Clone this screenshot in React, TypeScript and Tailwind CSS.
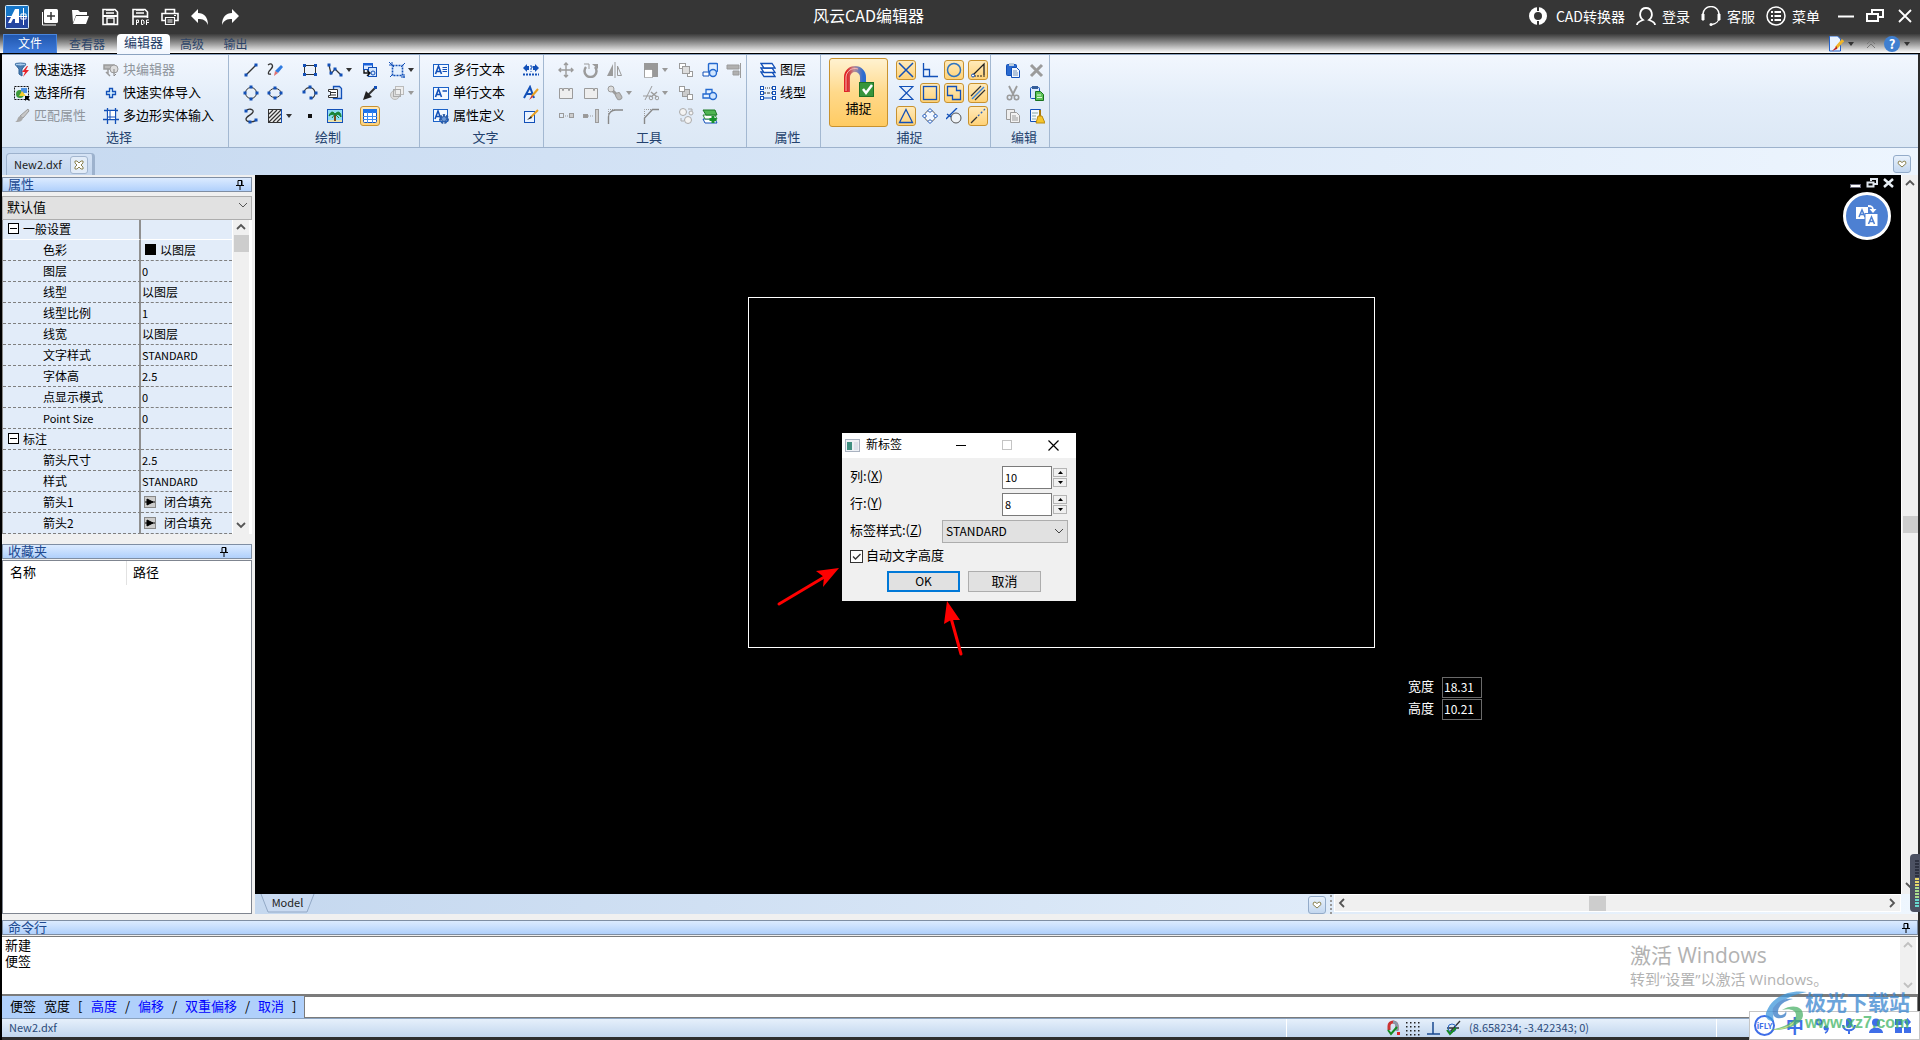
import { useState, type ReactNode } from "react";

const B = "#1250b8";
const G = "#9b9b9b";
const D = "#333";

type SvgProps = { children: ReactNode; w?: number; h?: number; vb?: string };

function Svg({ children, w = 16, h = 16, vb }: SvgProps) {
  return (
    <svg width={w} height={h} viewBox={vb ?? `0 0 ${w} ${h}`} fill="none" className="shrink-0" aria-hidden="true">
      {children}
    </svg>
  );
}

const dots = (pts: number[][], c = B) =>
  pts.map(([x, y]) => <rect key={`${x}-${y}`} x={x - 1.5} y={y - 1.5} width="3" height="3" fill={c} />);

const ico: Record<string, ReactNode> = {
  quickSelect: (
    <>
      <path d="M1 2h11l-4 5v7l-3-2V7z" fill="#4a7fb5" stroke="#2c5f94" />
      <ellipse cx="6.500" cy="2.500" rx="5.500" ry="1.500" fill="#a9cdee" stroke="#3c6ea3" />
      <path d="M13 4l-5 6h3l-2 5 6-7h-3l2-4z" fill="#e8252b" />
    </>
  ),
  selectAll: (
    <>
      <rect x=".5" y="1.500" width="14" height="13" stroke="#111" strokeDasharray="2 1" />
      <circle cx="6" cy="9" r="4" fill="#3f9a3a" />
      <rect x="7" y="3" width="6" height="5" fill="#4b8fe0" />
      <path d="M8 6l4 5H5z" fill="#f5cf2e" />
      <path d="M11 11h5l-2 2 2 2-1 1-2-2-2 2z" fill="#000" />
    </>
  ),
  matchProps: (
    <>
      <path d="M14 1l1 2-6 7-3-2z" fill="#c8c8c8" stroke={G} />
      <path d="M6 8l3 2c-1 4-4 4-8 4 3-1 2-5 5-6z" fill="#aaa" />
    </>
  ),
  blockEdit: (
    <>
      <path d="M1 3h10v4H1zM5 7v5M3 10l4 4" stroke={G} strokeWidth="1.500" fill="#bbb" />
      <circle cx="11" cy="7" r="4" stroke={G} fill="#ddd" />
      <path d="M11 7v7l2-2" stroke="#888" />
    </>
  ),
  plus: <path d="M6.500 3.500h3v3h3v3h-3v3h-3v-3h-3v-3h3z" stroke={B} fill="#d8f0ff" strokeWidth="1.300" />,
  polyEntity: (
    <>
      <path d="M4.500 0v16M0 11.500h16M1 2.500h14M12.500 0v16" stroke={B} strokeWidth="1.300" />
      <rect x="4.500" y="2.500" width="8" height="9" fill="#fff" stroke={B} />
      <path d="M7 2v10M4 9h9" stroke={B} />
    </>
  ),
  line: (
    <>
      <path d="M3 13L13 3" stroke={D} strokeWidth="1.300" />
      {dots([[3, 13], [13, 3]])}
    </>
  ),
  sketch: (
    <>
      <path d="M1 3c4-3 6 1 3 4s-4 6 0 5" stroke={D} strokeWidth="1.300" />
      <path d="M14 3l2 2-5 6-3-2z" fill="#2f7be0" />
      <path d="M8 9l3 2-4 3z" fill="#e07070" />
    </>
  ),
  rect: (
    <>
      <rect x="2.500" y="3.500" width="11" height="9" stroke={D} />
      {dots([[2.500, 3.500], [13.500, 3.500], [2.500, 12.500], [13.500, 12.500]])}
    </>
  ),
  polyline: (
    <>
      <path d="M2 3l2 9 4-5 6 6" stroke={D} strokeWidth="1.200" />
      {dots([[2, 3], [4, 11], [8, 7], [14, 13]])}
    </>
  ),
  insertBlock: (
    <>
      <rect x="1.500" y="1.500" width="9" height="6" fill="#dbe9ff" stroke={B} />
      <rect x="1" y="1" width="10" height="2.500" fill="#1b62d8" />
      <rect x="6.500" y="5.500" width="8" height="9" fill="#d5e6fb" stroke={B} />
      <path d="M2 8v3h5M5 8.500L8 11l-3 3" stroke="#111" strokeWidth="1.400" />
      <circle cx="11" cy="11" r="2" stroke={B} />
    </>
  ),
  boundary: (
    <>
      <rect x="3.500" y="3.500" width="10" height="10" stroke={B} strokeWidth="1.600" strokeDasharray="2 1" fill="#e4f0fe" />
      <path d="M0 0l5 5M3 0v3M0 3h3M16 1l-4 4M1 15l3-3M15 12v4M12 15h4" stroke={B} />
    </>
  ),
  circle: (
    <>
      <circle cx="8" cy="8" r="5.500" stroke={D} />
      {dots([[8, 2], [8, 14], [2, 8], [14, 8]])}
    </>
  ),
  ellipse: (
    <>
      <ellipse cx="8" cy="8" rx="6" ry="4.500" stroke={D} />
      {dots([[8, 3], [8, 13], [2, 8], [14, 8]])}
    </>
  ),
  arc: (
    <>
      <path d="M2 8a5.500 5.500 0 1 1 7 5.500" stroke={D} strokeWidth="1.300" />
      {dots([[2, 7], [8, 2], [14, 8], [9, 13]])}
    </>
  ),
  copyDoc: (
    <>
      <path d="M6.500 1.500h6l2 2v10h-8z" fill="#cfe0f7" stroke={B} strokeWidth="1.300" />
      <path d="M1.500 4.500h9v8h-9v-2h2v-4h-2zM4 7.500h5M4 10h5" fill="#fff" stroke={D} />
    </>
  ),
  leader: (
    <>
      <path d="M13 3L5 11" stroke={D} strokeWidth="2" />
      <path d="M1 15l3-9 6 6z" fill="#222" />
      {dots([[13.500, 2.500]])}
    </>
  ),
  region: (
    <>
      <circle cx="6" cy="10" r="4.500" fill="#ddd" stroke="#bbb" />
      <rect x="6.500" y="1.500" width="8" height="8" fill="#eee" stroke="#bbb" />
      <rect x="4.500" y="4.500" width="7" height="7" stroke="#aaa" />
    </>
  ),
  spline: (
    <>
      <path d="M3 3c2-3 8-2 7 1s-7 4-7 7 6 4 11 1" stroke={D} strokeWidth="1.300" />
      {dots([[3, 3], [13, 12], [7, 14]])}
    </>
  ),
  hatch: (
    <>
      <rect x="1.500" y="1.500" width="13" height="13" stroke={D} fill="#eee" />
      <path d="M2 6l4-4M2 10l8-8M2 14L14 2M6 14l8-8M10 14l4-4" stroke={D} strokeWidth="1.200" />
      <path d="M14.500 1v14" stroke={B} />
    </>
  ),
  point: <rect x="6" y="6" width="4" height="4" fill="#111" />,
  palm: (
    <>
      <rect x=".5" y="1.500" width="15" height="13" fill="#8fdcf2" stroke={B} />
      <path d="M1 12h14v2H1z" fill="#e9e3b0" />
      <path d="M8 6v7" stroke="#7a4a1c" strokeWidth="2" />
      <path d="M8 6C5 2 3 5 2 8c2-2 4-2 6-1 2-1 4-1 6 2 0-4-2-7-6-3zM8 6l-3 4M8 6l4 4" fill="#178437" stroke="#178437" />
    </>
  ),
  table: (
    <>
      <rect x="1.500" y="1.500" width="13" height="13" rx="1" fill="#fff" stroke={B} />
      <rect x="1" y="1" width="14" height="4" fill="#1f74ea" />
      <path d="M1 8.500h14M1 11.500h14M5.500 4v11M10.500 4v11" stroke="#3e8bf0" />
    </>
  ),
  mtext: (
    <>
      <rect x=".5" y="2.500" width="15" height="12" fill="#f4f9ff" stroke="#1b62c8" />
      <path d="M2.500 12l3-8 3 8M4 9.500h4" stroke={B} strokeWidth="1.600" />
      <path d="M9.500 5.500H14M9.500 7.500H14M9.500 9.500H14" stroke={B} />
    </>
  ),
  stext: (
    <>
      <rect x=".5" y="2.500" width="15" height="12" fill="#f4f9ff" stroke="#1b62c8" />
      <path d="M2.500 12l3-8 3 8M4 9.500h4" stroke={B} strokeWidth="1.600" />
      <path d="M9.500 6H14" stroke={B} strokeWidth="1.500" />
    </>
  ),
  attdef: (
    <>
      <rect x=".5" y="1.500" width="14" height="12" fill="#f4f9ff" stroke="#1b62c8" />
      <path d="M2 11l3-8 3 8M3 8.500h4" stroke={B} strokeWidth="1.500" />
      <circle cx="11" cy="11" r="3.500" stroke="#2a5ca8" strokeWidth="3" strokeDasharray="2 1" />
      <circle cx="11" cy="11" r="2.500" fill="#6d9ad8" stroke="#2a5ca8" />
    </>
  ),
  findText: (
    <>
      <path d="M0 6l4-4v2h2v4H4v2zM16 6l-4-4v2h-2v4h2v2z" fill={B} />
      <path d="M7 4h2v2H8v2M8 9v1" stroke={B} />
      <path d="M0 12.500h16" stroke={B} strokeDasharray="2 1" strokeWidth="2" />
    </>
  ),
  textStyle: (
    <>
      <path d="M1 13L7 2l4 11M3 9h6" stroke={B} strokeWidth="2" />
      <path d="M15 4l-6 7" stroke="#e8a020" strokeWidth="2" />
      <path d="M9 10l-3 5 4-3z" fill="#c33" />
    </>
  ),
  editText: (
    <>
      <rect x="1.500" y="3.500" width="10" height="11" fill="#eaf3ff" stroke={B} />
      <path d="M15 2L8 9" stroke="#e8a020" strokeWidth="2" />
      <path d="M8 8l-4 4 5-2z" fill="#222" />
    </>
  ),
  move: <path d="M8 1v14M1 8h14M6 3l2-2 2 2M6 13l2 2 2-2M3 6L1 8l2 2M13 6l2 2-2 2" stroke={G} strokeWidth="1.400" />,
  rotate: (
    <>
      <path d="M3 5a6 6 0 1 0 9 0" stroke={G} strokeWidth="2.500" />
      <path d="M9 2h6v5z" fill={G} />
      <path d="M1 2h5v5" stroke={G} />
    </>
  ),
  mirror: (
    <>
      <path d="M6 2v12H0z" fill={G} />
      <path d="M10.500 4v9.500h4z" stroke={G} />
      <path d="M8 0v16" stroke={G} />
    </>
  ),
  scale: (
    <>
      <rect x="1" y="1" width="14" height="14" fill="#999" />
      <rect x="1.500" y="7.500" width="8" height="8" fill="#fff" stroke="#777" strokeDasharray="1 1" />
    </>
  ),
  group1: (
    <>
      <rect x="1.500" y="1.500" width="6" height="5" stroke={G} fill="#fff" />
      <rect x="9.500" y="9.500" width="5" height="5" stroke={G} fill="#fff" />
      <rect x="4.500" y="4.500" width="7" height="7" stroke={G} fill="#ddd" />
    </>
  ),
  group2: (
    <>
      <rect x="4.500" y="4.500" width="7" height="7" stroke={G} fill="#ccc" />
      <rect x="1.500" y="1.500" width="5" height="5" stroke={G} fill="#fff" />
      <rect x="9.500" y="9.500" width="5" height="5" stroke={G} fill="#fff" />
    </>
  ),
  explode: (
    <>
      <rect x="6.500" y="1.500" width="9" height="8" rx="1" stroke="#2369cf" fill="#e1efff" strokeWidth="1.400" />
      <path d="M1 10h6v4H1z" fill="#fff" stroke={B} />
      <circle cx="11" cy="11" r="3.500" stroke="#2369cf" fill="#cfe5ff" strokeWidth="1.400" />
    </>
  ),
  join: (
    <>
      <path d="M4 9V4.500h6V7M1 9h7v4H1z" fill="#e8f3ff" stroke="#2369cf" strokeWidth="1.300" />
      <circle cx="11" cy="11" r="3.500" stroke="#2369cf" fill="#cfe5ff" strokeWidth="1.400" />
    </>
  ),
  align: (
    <>
      <path d="M14.500 1v15" stroke={G} />
      <path d="M1 3h12v4H1zM7 9h6v4H7z" fill="#b0b0b0" stroke={G} />
    </>
  ),
  break1: <path d="M1.500 3.500h3v2h1v-2h5v2h1v-2h3v10h-13z" stroke={G} fill="#eee" />,
  break2: <path d="M1.500 3.500h9v2h1v-2h3v10h-13z" stroke={G} fill="#eee" />,
  chain: (
    <>
      <circle cx="4" cy="4" r="3" fill="#ddd" stroke={G} />
      <path d="M6 6l4 4" stroke={G} strokeWidth="3" />
      <rect x="9" y="8" width="5" height="7" rx="2" transform="rotate(-30 11 11)" fill="#bbb" stroke={G} />
    </>
  ),
  trim: (
    <>
      <path d="M2 15L9 1M0 11h8" stroke={G} />
      <path d="M8 7l6 5M14 7l-6 5" stroke={G} strokeWidth="1.400" />
      <circle cx="8" cy="13" r="1.800" stroke={G} />
      <circle cx="14" cy="13" r="1.800" stroke={G} />
    </>
  ),
  stretch: (
    <>
      <rect x="1.500" y="5.500" width="4" height="4" stroke={G} />
      <path d="M7 8h4" stroke={G} strokeDasharray="1 1" />
      <rect x="11.500" y="5.500" width="4" height="4" stroke={G} fill="#ccc" />
    </>
  ),
  extend: (
    <>
      <rect x=".5" y="6.500" width="4" height="3" stroke={G} fill="#999" />
      <path d="M5 8h6" stroke={G} strokeDasharray="1 1" />
      <rect x="12.500" y="1.500" width="3" height="13" stroke={G} fill="#ccc" />
    </>
  ),
  fillet: (
    <>
      <path d="M1.500 16V9c0-4 3-7 7-7H16" stroke="#888" strokeWidth="1.400" />
      <path d="M1.500 8V1.500H8" stroke={G} strokeDasharray="1 1" />
    </>
  ),
  chamfer: (
    <>
      <path d="M1.500 16V10l8-8.500H16" stroke="#888" strokeWidth="1.400" />
      <path d="M1.500 8V1.500H8" stroke={G} strokeDasharray="1 1" />
    </>
  ),
  spheres: (
    <>
      <circle cx="5" cy="4" r="3.500" fill="#f4f4f4" stroke="#aaa" />
      <circle cx="10" cy="12" r="3.500" fill="#f4f4f4" stroke="#aaa" />
      <circle cx="13" cy="5" r="2" fill="#f4f4f4" stroke="#aaa" />
      <path d="M10 1h4v2M3 10v3h3" stroke="#aaa" />
    </>
  ),
  layerAdd: (
    <>
      <path d="M1 11l2 4h12l-2-4z" fill="#fff" stroke={B} />
      <path d="M1 7l2 4h12l-2-4z" fill="#fff" stroke="#2a8a35" />
      <path d="M1 2h12l2 5H4z" fill="#4fb552" stroke="#1d7a26" />
      <path d="M11 8v7M7.500 11.500h7" stroke="#16912a" strokeWidth="3" />
    </>
  ),
  layers: (
    <>
      <path d="M1 10h11l3 4.500H4z" fill="#fff" stroke={B} strokeWidth="1.300" />
      <path d="M1 6h11l3 4.500H4z" fill="#fff" stroke={B} strokeWidth="1.300" />
      <path d="M1 1.500h11l3 4.500H4z" fill="#fff" stroke={B} strokeWidth="1.300" />
    </>
  ),
  linetype: (
    <>
      <path d="M3 3h10" stroke={D} strokeDasharray="1 1" />
      <path d="M3 8h10" stroke={D} strokeDasharray="3 1" />
      <path d="M3 13h10" stroke={B} />
      {[3, 8, 13].map((y) => [2, 14].map((x) => <rect key={`${x}${y}`} x={x - 1.500} y={y - 1.500} width="3" height="3" fill="#fff" stroke={B} />))}
    </>
  ),
  sCross: <path d="M1 1l14 14M15 1L1 15" stroke={B} strokeWidth="1.500" />,
  sPerp: <path d="M1.500 1v13.500H16M1.500 7.500h6v7" stroke={B} strokeWidth="1.300" />,
  sCircle: <circle cx="8" cy="8" r="6.500" stroke="#2e73c0" strokeWidth="1.500" />,
  sAngle: (
    <>
      <path d="M2 14L14 2v11" stroke="#222" strokeWidth="1.300" />
      <path d="M4 14h11" stroke="#222" strokeDasharray="2 1" />
      <circle cx="3" cy="13.500" r="1.500" fill="#fff" stroke={B} />
    </>
  ),
  sHour: <path d="M1 1.500h14L2 14.500h13L2 1.500" stroke={B} strokeWidth="1.200" />,
  sSquare: <rect x="1.500" y="1.500" width="13" height="13" stroke={B} strokeWidth="1.300" />,
  sPoly: <path d="M1.500 1.500h9v4h4v9h-8v-4h-5z" stroke={B} strokeWidth="1.300" />,
  sPara: (
    <>
      <path d="M1 11L11 1M5 15L15 5" stroke="#333" strokeWidth="1.200" />
      <path d="M2 14L14 2" stroke="#3d86de" strokeWidth="1.500" />
    </>
  ),
  sTri: <path d="M8 1.500l6.500 13h-13z" stroke={B} strokeWidth="1.300" />,
  sQuad: (
    <>
      <circle cx="8" cy="8" r="5.500" fill="#f3f8ff" stroke="#666" />
      {[[8, 2.500], [8, 13.500], [2.500, 8], [13.500, 8]].map(([x, y]) => (
        <path key={`${x}${y}`} d={`M${x} ${y - 2}l2 2-2 2-2-2z`} fill="#fff" stroke={B} />
      ))}
    </>
  ),
  sTan: (
    <>
      <circle cx="10" cy="10" r="5" fill="#f0f4f8" stroke="#555" />
      <path d="M0 11L11 0M1 6l4 3" stroke={B} strokeWidth="1.400" />
    </>
  ),
  sExt: (
    <>
      <path d="M1 15l6-6" stroke="#333" strokeWidth="1.300" />
      <path d="M8 8l7-7" stroke="#2a66c0" strokeDasharray="2 2" strokeWidth="1.300" />
    </>
  ),
  paste: (
    <>
      <rect x="1.500" y="2.500" width="10" height="11" rx="1" fill="#2a6ad0" stroke={B} />
      <rect x="4" y="1" width="5" height="3" fill="#bcd" />
      <path d="M6.500 5.500h5l3 3v7h-8z" fill="#f4f8ff" stroke={B} />
      <path d="M8 9h4M8 11h5M8 13h5" stroke="#7090b8" />
    </>
  ),
  del: <path d="M2 3l11 11M13 3L2 14" stroke={G} strokeWidth="3" />,
  cut: (
    <>
      <path d="M4 1l5 10M12 1L7 11" stroke={G} strokeWidth="1.800" />
      <circle cx="4.500" cy="12.500" r="2.200" stroke={G} strokeWidth="1.600" />
      <circle cx="11.500" cy="12.500" r="2.200" stroke={G} strokeWidth="1.600" />
    </>
  ),
  pasteGreen: (
    <>
      <rect x="1.500" y="2.500" width="9" height="11" rx="1" fill="#dbe9fc" stroke={B} />
      <rect x="3" y="1" width="6" height="3" fill="#345d9a" />
      <path d="M6.500 6.500h5l3 3v6h-8z" fill="#5cc256" stroke="#17711f" />
      <path d="M8 10h4M8 12.500h5" stroke="#dff7dc" />
    </>
  ),
  copy: (
    <>
      <path d="M1.500 1.500h8v10h-8z" fill="#eee" stroke={G} />
      <path d="M5.500 4.500h6l3 3v7h-9z" fill="#f2f2f2" stroke={G} />
      <path d="M7 8h4M7 10h6M7 12h6" stroke={G} />
    </>
  ),
  pasteBrush: (
    <>
      <path d="M1.500 1.500h10v12h-10z" fill="#f4f8ff" stroke={B} />
      <path d="M3 5h6M3 8h4M3 11h4" stroke="#8aa" />
      <path d="M11 2v7" stroke="#a87a10" strokeWidth="2" />
      <path d="M9 8h4l3 7H7z" fill="#f5c52c" stroke="#b98a12" />
    </>
  ),
};

function Caret({ dim }: { dim?: boolean }) {
  return (
    <Svg w={6} h={4}>
      <path d="M0 0h6L3 4z" fill={dim ? "#999" : "#333"} />
    </Svg>
  );
}

type Tool = { n: string; t: string; a?: boolean; dim?: boolean; on?: boolean } | null;

function IconTool({ tool }: { tool: Tool }) {
  if (!tool) return <span />;
  return (
    <button
      aria-label={tool.t}
      className={
        tool.on
          ? "flex size-5 items-center justify-center justify-self-start rounded-[3px] border border-[#c8922f] bg-gradient-to-b from-[#ffeaba] to-[#ffd277]"
          : "flex h-5 items-center gap-[3px] justify-self-start px-0.5"
      }
    >
      <Svg>{ico[tool.n]}</Svg>
      {tool.a && <Caret dim={tool.dim} />}
    </button>
  );
}

function TextTool({ n, t, dim }: { n: string; t: string; dim?: boolean }) {
  return (
    <button className={`flex h-[23px] items-center gap-1 whitespace-nowrap text-[13px] leading-[19px] ${dim ? "text-[#8f959c]" : "text-black"}`}>
      <Svg>{ico[n]}</Svg>
      <span className="pb-[3px]">{t}</span>
    </button>
  );
}

function Group({ label, width, children }: { label: string; width: string; children: ReactNode }) {
  return (
    <section aria-label={label} className={`flex shrink-0 flex-col border-r border-[#a3b8d1] pt-[3px] ${width}`}>
      <div className="flex h-[69px]">{children}</div>
      <h2 className="pl-2 text-center text-[13px] leading-5 text-[#24426e]">{label}</h2>
    </section>
  );
}

const drawTools: Tool[] = [
  { n: "line", t: "直线" }, { n: "sketch", t: "草图" }, { n: "rect", t: "矩形" }, { n: "polyline", t: "多段线", a: true }, { n: "insertBlock", t: "插入块" }, { n: "boundary", t: "边界", a: true },
  { n: "circle", t: "圆" }, { n: "ellipse", t: "椭圆" }, { n: "arc", t: "圆弧" }, { n: "copyDoc", t: "外部参照" }, { n: "leader", t: "引线" }, { n: "region", t: "面域", a: true, dim: true },
  { n: "spline", t: "样条曲线" }, { n: "hatch", t: "填充", a: true }, { n: "point", t: "点" }, { n: "palm", t: "图像" }, { n: "table", t: "表格", on: true }, null,
];

const editTools: Tool[] = [
  { n: "move", t: "移动" }, { n: "rotate", t: "旋转" }, { n: "mirror", t: "镜像" }, { n: "scale", t: "缩放", a: true, dim: true }, { n: "group1", t: "前置" }, { n: "explode", t: "分解" }, { n: "align", t: "对齐" },
  { n: "break1", t: "打断" }, { n: "break2", t: "打断于点" }, { n: "chain", t: "连接", a: true, dim: true }, { n: "trim", t: "修剪", a: true, dim: true }, { n: "group2", t: "后置" }, { n: "join", t: "合并" }, null,
  { n: "stretch", t: "拉伸" }, { n: "extend", t: "延伸" }, { n: "fillet", t: "圆角" }, { n: "chamfer", t: "倒角" }, { n: "spheres", t: "替换" }, { n: "layerAdd", t: "添加图层" }, null,
];

const snapTools: Tool[] = [
  { n: "sCross", t: "交点", on: true }, { n: "sPerp", t: "垂足" }, { n: "sCircle", t: "圆心", on: true }, { n: "sAngle", t: "角度", on: true },
  { n: "sHour", t: "最近点" }, { n: "sSquare", t: "端点", on: true }, { n: "sPoly", t: "插入点", on: true }, { n: "sPara", t: "平行", on: true },
  { n: "sTri", t: "中点", on: true }, { n: "sQuad", t: "象限点" }, { n: "sTan", t: "切点" }, { n: "sExt", t: "延长线", on: true },
];

const clipTools: Tool[] = [
  { n: "paste", t: "粘贴" }, { n: "del", t: "删除" }, { n: "cut", t: "剪切" },
  { n: "pasteGreen", t: "粘贴为块" }, { n: "copy", t: "复制" }, { n: "pasteBrush", t: "清理" },
];

const quick: [string, ReactNode][] = [
  ["新建", <><rect x="3" y="1" width="14" height="14" rx="1.500" fill="#fff" /><path d="M1.500 4v13H15" stroke="#fff" /><path d="M10 4v8M6 8h8" stroke="#363636" strokeWidth="1.500" /></>],
  ["打开", <><path d="M1 2h6l2 2h7v3H5l-3 8z" fill="#fff" /><path d="M5 8h13l-3 8H2z" fill="#fff" /></>],
  ["保存", <><path d="M2 1.500h12l2.500 2.500v12.500H2z" stroke="#fff" strokeWidth="1.600" /><path d="M5 5h8M5 2h8" stroke="#fff" strokeWidth="1.500" /><path d="M2 8h14" stroke="#fff" strokeWidth="2" /><path d="M6 10v6h7v-6z" stroke="#fff" strokeWidth="1.400" /></>],
  ["保存为PDF", <><path d="M2 17V1.500h12l2.500 2.500V10" stroke="#fff" strokeWidth="1.600" /><path d="M5 5h8M5 2h8" stroke="#fff" strokeWidth="1.500" /><path d="M2 8.500h14" stroke="#fff" strokeWidth="2" /><path d="M5.500 17v-5h2v2.500h-2M10.500 12v4.500H12l1-1v-2.500l-1-1zM15.500 17v-5H18M15.500 14.500H18" stroke="#fff" /></>],
  ["打印", <><path d="M4.500 5V1.500h9V5M4 12.500H1V5.500h16v7h-3" stroke="#fff" strokeWidth="1.600" /><path d="M4.500 9.500h9v7h-9zM6.500 12h5M6.500 14h5M13 7.500h2" stroke="#fff" strokeWidth="1.200" /></>],
  ["撤销", <path d="M7 1v4c6 0 10 4 10 12-2-5-5-6-10-6v4L0 8z" fill="#fff" />],
  ["重做", <path d="M11 1v4C5 5 1 9 1 17c2-5 5-6 10-6v4l7-7z" fill="#fff" />],
];

function TitleBar() {
  const link = "flex items-center gap-1.5 text-sm leading-5 text-white whitespace-nowrap";
  return (
    <header className="flex h-[34px] shrink-0 items-center bg-[#363636] text-white">
      <div className="flex items-center pl-[5px]">
        <Svg w={24} h={24}>
          <rect x=".5" y=".5" width="23" height="23" rx="1" fill="#1676c8" stroke="#d7ecfb" />
          <rect x="1" y="12" width="22" height="11" fill="#2446a0" />
          <path d="M3 18L10 4h4v14h-4v-4H8l-2 4z" fill="#fff" />
          <path d="M2 11.500h20M18.500 3v17M16 9h5v5h-5z" stroke="#fff" />
        </Svg>
        <div className="ml-1.5 flex">
          {quick.map(([t, d]) => (
            <button key={t} aria-label={t} className="flex h-7 w-[30px] items-center justify-center">
              <Svg w={18} h={18}>{d}</Svg>
            </button>
          ))}
        </div>
      </div>
      <h1 className="flex-1 pr-9 pb-1 text-center text-base leading-6 font-normal">风云CAD编辑器</h1>
      <nav className="flex items-center pb-0.5">
        <a href="#converter" className="flex items-center gap-2 text-sm leading-5 whitespace-nowrap text-white">
          <Svg w={20} h={20}>
            <circle cx="10" cy="10" r="6.500" stroke="#fff" strokeWidth="5" />
            <path d="M10 0v5M10 15v5" stroke="#363636" strokeWidth="2" />
          </Svg>
          CAD转换器
        </a>
        <a href="#login" className={`${link} ml-[11px]`}>
          <Svg w={20} h={20}>
            <path d="M1 19c0-3 3-4 6-5-5-4-3-12 3-12s8 8 3 12c3 1 6 2 6 5" stroke="#fff" strokeWidth="1.800" />
          </Svg>
          登录
        </a>
        <a href="#service" className={`${link} ml-[11px]`}>
          <Svg w={20} h={20}>
            <path d="M2 8a8 7.500 0 0 1 16 0v3c0 4-3 7-7 7.500" stroke="#fff" strokeWidth="1.400" />
            <path d="M1 8v6h2V8zM17 8v6h2V8z" fill="#fff" stroke="#fff" />
            <circle cx="10" cy="18.500" r="1.500" fill="#fff" />
          </Svg>
          客服
        </a>
        <a href="#menu" className={`${link} ml-[11px]`}>
          <Svg w={20} h={20}>
            <circle cx="10" cy="10" r="9" stroke="#fff" strokeWidth="1.500" />
            <path d="M5 6h2M5 10h2M5 14h2M8.500 6H15M8.500 10H15M8.500 14H15" stroke="#fff" strokeWidth="1.800" />
          </Svg>
          菜单
        </a>
        <button aria-label="最小化" className="ml-[18px]"><Svg><path d="M0 8.500h16" stroke="#fff" strokeWidth="2" /></Svg></button>
        <button aria-label="还原" className="ml-3">
          <Svg w={18} h={16}>
            <path d="M1 6h11v7H1zM6 5V2h11v7h-4" stroke="#fff" strokeWidth="2" />
          </Svg>
        </button>
        <button aria-label="关闭" className="mr-2 ml-3.5"><Svg w={14} h={16}><path d="M1 2l12 12M13 2L1 14" stroke="#fff" strokeWidth="1.800" /></Svg></button>
      </nav>
    </header>
  );
}

function TabRow() {
  const tab = "pb-px text-xs leading-[17px] text-[#2d4468]";
  return (
    <nav className="flex h-5 shrink-0 items-stretch border-b border-black bg-gradient-to-b from-[#3c3c3c] to-white px-[3px]">
      <button className="w-[54px] border border-b-0 border-[#4a86dc] bg-gradient-to-b from-[#2157ae] to-[#3e7bdc] pb-0.5 text-xs leading-4 text-white">文件</button>
      <button className={`${tab} w-[60px]`}>查看器</button>
      <button className="-mb-px w-[53px] rounded-t-sm bg-gradient-to-b from-white to-[#f2f7fe] pb-1 text-[13px] leading-4 text-[#1f3c66]">编辑器</button>
      <button className={`${tab} w-11`}>高级</button>
      <button className={`${tab} w-[43px]`}>输出</button>
      <div className="ml-auto flex items-center gap-1 pr-[7px]">
        <button aria-label="样式" className="flex items-center gap-1">
          <Svg><path d="M1.500 0h8l3 3v12h-11z" fill="#e9f3ff" stroke="#2563c9" /><path d="M15 4L8 12" stroke="#f0b428" strokeWidth="3" /><path d="M9 10l-5 5 5-2z" fill="#b22" /></Svg>
          <Caret />
        </button>
        <button aria-label="折叠功能区" className="ml-2"><Svg w={10} h={10}><path d="M1 5l4-4 4 4M1 9l4-4 4 4" stroke="#777" /></Svg></button>
        <button aria-label="帮助" className="ml-1 flex items-center gap-1">
          <span className="flex size-4 items-center justify-center rounded-full bg-[#3f7fd0] text-[13px] leading-4 font-bold text-white">?</span>
          <Caret />
        </button>
      </div>
    </nav>
  );
}

function Ribbon() {
  return (
    <div className="flex h-[94px] shrink-0 overflow-hidden border-y border-t-[#8ba3c0] border-b-[#9db2cc] bg-gradient-to-b from-[#f2f7fe] via-[#e3edf9] to-[#dce8f5]">
      <Group label="选择" width="w-[227px]">
        <div className="grid grid-cols-[89px_auto] content-start pl-3">
          <div className="grid grid-rows-[23px_23px_23px]">
            <TextTool n="quickSelect" t="快速选择" />
            <TextTool n="selectAll" t="选择所有" />
            <TextTool n="matchProps" t="匹配属性" dim />
          </div>
          <div className="grid grid-rows-[23px_23px_23px]">
            <TextTool n="blockEdit" t="块编辑器" dim />
            <TextTool n="plus" t="快速实体导入" />
            <TextTool n="polyEntity" t="多边形实体输入" />
          </div>
        </div>
      </Group>
      <Group label="绘制" width="w-[191px]">
        <div className="grid grid-cols-[24px_35px_25px_35px_27px_33px] grid-rows-[23px_23px_23px] items-center pl-3">
          {drawTools.map((t, i) => <IconTool key={i} tool={t} />)}
        </div>
      </Group>
      <Group label="文字" width="w-[124px]">
        <div className="grid grid-cols-[88px_20px] grid-rows-[23px_23px_23px] items-center pl-[13px]">
          <TextTool n="mtext" t="多行文本" /><IconTool tool={{ n: "findText", t: "查找文本" }} />
          <TextTool n="stext" t="单行文本" /><IconTool tool={{ n: "textStyle", t: "文字样式" }} />
          <TextTool n="attdef" t="属性定义" /><IconTool tool={{ n: "editText", t: "编辑文字" }} />
        </div>
      </Group>
      <Group label="工具" width="w-[203px]">
        <div className="grid grid-cols-[25px_24px_36px_35px_24px_24px_24px] grid-rows-[23px_23px_23px] items-center pl-3">
          {editTools.map((t, i) => <IconTool key={i} tool={t} />)}
        </div>
      </Group>
      <Group label="属性" width="w-[74px]">
        <div className="grid grid-rows-[23px_23px_23px] pl-[13px]">
          <TextTool n="layers" t="图层" />
          <TextTool n="linetype" t="线型" />
        </div>
      </Group>
      <Group label="捕捉" width="w-[170px]">
        <button className="ml-2 flex w-[59px] shrink-0 flex-col items-center rounded-[3px] border border-[#c8922f] bg-gradient-to-b from-[#fff2d0] via-[#ffd98a] to-[#ffcb62] pt-1.5 text-[13px] leading-[18px] text-black">
          <Svg w={32} h={34}>
            <defs>
              <linearGradient id="mag" x1="0" x2="1"><stop offset="0" stopColor="#e02424" /><stop offset=".45" stopColor="#b98f98" /><stop offset="1" stopColor="#2d6cd0" /></linearGradient>
            </defs>
            <path d="M4 27V12a8 8 0 0 1 16 0v9" stroke="url(#mag)" strokeWidth="6" />
            <path d="M3 26V12a9 9 0 0 1 12-8" stroke="#f6b4b4" />
            <rect x="16.500" y="17.500" width="14" height="14" fill="#37953c" stroke="#1e7326" />
            <path d="M20 24l3 4 6-8" stroke="#fff" strokeWidth="2.500" />
          </Svg>
          捕捉
        </button>
        <div className="ml-2 grid grid-cols-[24px_24px_24px_20px] grid-rows-[23px_23px_23px] items-center">
          {snapTools.map((t, i) => <IconTool key={i} tool={t} />)}
        </div>
      </Group>
      <Group label="编辑" width="w-[59px]">
        <div className="grid grid-cols-[24px_20px] grid-rows-[23px_23px_23px] items-center pl-3">
          {clipTools.map((t, i) => <IconTool key={i} tool={t} />)}
        </div>
      </Group>
    </div>
  );
}

function HeartButton() {
  return (
    <button aria-label="更多" className="flex h-[18px] w-[18px] items-center justify-center rounded-[3px] border border-[#93abc9] bg-gradient-to-b from-[#e8f1fc] to-[#c3d7ef]">
      <Svg w={10} h={8}><path d="M5 7L1 3.500 1.500 1.500 3 1l2 1.500L7 1l1.500.5.5 2z" fill="#fff" stroke="#8a8250" /></Svg>
    </button>
  );
}

function Pin() {
  return (
    <button aria-label="固定面板">
      <Svg w={8} h={10}><path d="M2 .5h4v5H2zM0 5.500h8M4 6v4" stroke="#000" /><path d="M5.500 1v5" stroke="#000" /></Svg>
    </button>
  );
}

function PanelHead({ title, pad = "pr-[7px]" }: { title: string; pad?: string }) {
  return (
    <div className={`flex h-[15px] shrink-0 items-center justify-between border border-[#7f8ea3] bg-gradient-to-b from-[#dcebff] to-[#b0d0fb] pl-[5px] ${pad}`}>
      <h2 className="pb-0.5 text-[13px] leading-[13px] text-[#204a90]">{title}</h2>
      <Pin />
    </div>
  );
}

function Chev({ dir, c = "#555" }: { dir: "up" | "down" | "left" | "right"; c?: string }) {
  const d = { up: "M1 6l4-4 4 4", down: "M1 3l4 4 4-4", left: "M6 1L2 5l4 4", right: "M3 1l4 4-4 4" }[dir];
  return <Svg w={10} h={10}><path d={d} stroke={c} strokeWidth="1.800" /></Svg>;
}

const arrow = (
  <Svg w={12} h={12}><rect x=".5" y=".5" width="11" height="11" fill="#ccc" stroke="#888" /><path d="M1 6h10M3 3l6 3-6 3z" fill="#000" stroke="#000" /></Svg>
);

const rows: { k: string; v?: string; i?: ReactNode; head?: boolean; latin?: boolean }[] = [
  { k: "一般设置", head: true },
  { k: "色彩", v: "以图层", i: <span className="ml-[3px] inline-block size-[11px] bg-black" /> },
  { k: "图层", v: "0", latin: true },
  { k: "线型", v: "以图层" },
  { k: "线型比例", v: "1", latin: true },
  { k: "线宽", v: "以图层" },
  { k: "文字样式", v: "STANDARD", latin: true },
  { k: "字体高", v: "2.5", latin: true },
  { k: "点显示模式", v: "0", latin: true },
  { k: "Point Size", v: "0", latin: true },
  { k: "标注", head: true },
  { k: "箭头尺寸", v: "2.5", latin: true },
  { k: "样式", v: "STANDARD", latin: true },
  { k: "箭头1", v: "闭合填充", i: <span className="mr-1 ml-0.5">{arrow}</span> },
  { k: "箭头2", v: "闭合填充", i: <span className="mr-1 ml-0.5">{arrow}</span> },
];

function SidePanel() {
  return (
    <aside className="flex w-[253px] shrink-0 flex-col bg-[#f0f0f0] pt-0.5 pr-[3px]">
      <PanelHead title="属性" />
      <div className="relative mt-px h-6 shrink-0">
        <select aria-label="默认值" className="size-full appearance-none border border-[#adadad] bg-[#e1e1e1] px-1 pb-0.5 text-[13px] leading-5 text-black">
          <option>默认值</option>
        </select>
        <span className="pointer-events-none absolute top-[7px] right-1"><Svg w={10} h={10}><path d="M1 3l4 4 4-4" stroke="#555" /></Svg></span>
      </div>
      <div className="mt-px flex shrink-0 border-t border-l border-[#8a8a8a] bg-[#e2ecf9]">
        <table className="flex-1 table-fixed border-separate border-spacing-0 text-xs leading-5">
          <colgroup><col className="w-[138px]" /><col /></colgroup>
          <tbody>
            {rows.map((r) => (
              <tr key={r.k} className="h-[21px]">
                <th scope="row" className={`border-r-2 border-b border-r-[#8f8f8f] border-b-[#7f7f7f] p-0 text-left font-normal text-black ${r.k === "一般设置" ? "border-b-white" : "[border-bottom-style:dashed]"} ${r.head ? "pl-[5px]" : "pl-10"} ${r.k === "Point Size" ? "text-[11px]" : ""}`}>
                  <span className="flex h-5 items-center gap-1 pb-px">
                    {r.head && <Svg w={11} h={11}><rect x=".5" y=".5" width="10" height="10" fill="#fff" stroke="#000" /><path d="M2 5.500h7" stroke="#000" /></Svg>}
                    {r.k}
                  </span>
                </th>
                <td className={`border-b border-b-[#7f7f7f] p-0 pl-px ${r.k === "一般设置" ? "border-b-white" : "[border-bottom-style:dashed]"} ${r.latin ? "text-[11px]" : ""}`}>
                  <span className="flex h-5 items-center gap-1 pb-px">{r.i}{r.v}</span>
                </td>
              </tr>
            ))}
          </tbody>
        </table>
        <div className="flex w-5 shrink-0 flex-col items-center border-r-3 border-l border-white bg-[#f0f0f0] pt-1 pb-1">
          <Chev dir="up" />
          <div className="mt-0.5 h-[17px] w-[15px] bg-[#cdcdcd]" />
          <div className="mt-auto leading-none"><Chev dir="down" /></div>
        </div>
      </div>
      <div className="mt-2.5"><PanelHead title="收藏夹" pad="pr-[23px]" /></div>
      <table className="mt-px flex min-h-0 flex-1 flex-col border border-[#7f8590] bg-white text-[13px] leading-[22px] text-black">
        <thead>
          <tr className="flex">
            <th className="w-[124px] border-r border-[#e2e2e2] pb-0.5 pl-[7px] text-left font-normal">名称</th>
            <th className="flex-1 pl-1.5 text-left font-normal">路径</th>
          </tr>
        </thead>
      </table>
    </aside>
  );
}

function SpinRow({ id, label, hot, init }: { id: string; label: string; hot: string; init: number }) {
  const [v, setV] = useState(init);
  const sb = "flex h-[9px] w-3.5 items-center justify-center border border-[#b4b4b4] bg-[#f0f0f0]";
  return (
    <div className="flex h-[23px] items-center">
      <label htmlFor={id} className="flex-1 pb-1">{label}:(<u>{hot}</u>)</label>
      <input id={id} value={v} onChange={(e) => setV(Number(e.target.value) || 0)} className="h-[23px] w-[50px] border border-[#7a7a7a] bg-white px-0.5 pb-0.5 text-[11px] text-black" />
      <div className="mr-px ml-px flex flex-col gap-px">
        <button aria-label="增加" onClick={() => setV(v + 1)} className={sb}><Svg w={5} h={3}><path d="M0 3h5L2.500 0z" fill="#000" /></Svg></button>
        <button aria-label="减少" onClick={() => setV(v - 1)} className={sb}><Svg w={5} h={3}><path d="M0 0h5L2.500 3z" fill="#000" /></Svg></button>
      </div>
    </div>
  );
}

function LabelDialog() {
  const [auto, setAuto] = useState(true);
  const tb = "flex h-[25px] w-[46px] items-center justify-center";
  return (
    <div role="dialog" aria-label="新标签" className="absolute top-[258px] left-[587px] flex w-[234px] flex-col bg-[#f0f0f0] pb-[9px] text-[13px] leading-5 text-black">
      <div className="flex h-[25px] items-center bg-white pb-px pl-[3px]">
        <Svg w={15} h={13}>
          <rect x=".5" y=".5" width="14" height="12" fill="#eef1f5" stroke="#a9b2c0" />
          <rect x="2" y="3" width="5" height="8" fill="#3f8f80" />
          <rect x="9" y="3" width="4" height="8" fill="#dde2ea" />
        </Svg>
        <span className="ml-1.5 flex-1 pb-0.5 text-xs">新标签</span>
        <button aria-label="最小化" className={tb}><Svg w={10} h={10}><path d="M0 5.500h10" stroke="#000" /></Svg></button>
        <button aria-label="最大化" disabled className={tb}><Svg w={10} h={10}><rect x=".5" y=".5" width="9" height="9" stroke="#c4c4c4" /></Svg></button>
        <button aria-label="关闭" className={tb}><Svg w={11} h={11}><path d="M.5.5l10 10M10.500.5l-10 10" stroke="#000" strokeWidth="1.200" /></Svg></button>
      </div>
      <div className="flex flex-col gap-1 px-2 pt-2">
        <SpinRow id="cols" label="列" hot="X" init={10} />
        <SpinRow id="rows" label="行" hot="Y" init={8} />
        <div className="flex h-[23px] items-center">
          <label htmlFor="style" className="flex-1 pb-1">标签样式:(<u>Z</u>)</label>
          <div className="relative h-[23px] w-[126px]">
            <select id="style" className="size-full appearance-none border border-[#adadad] bg-[#e1e1e1] px-[3px] pb-px text-xs leading-5 text-black"><option>STANDARD</option></select>
            <span className="pointer-events-none absolute top-1.5 right-1"><Svg w={10} h={10}><path d="M1 3l4 4 4-4" stroke="#444" /></Svg></span>
          </div>
        </div>
        <label className="flex h-[18px] items-center gap-[3px]">
          <span className="relative size-[13px]">
            <input type="checkbox" checked={auto} onChange={(e) => setAuto(e.target.checked)} className="block size-[13px] appearance-none border border-[#333] bg-white" />
            {auto && <span className="pointer-events-none absolute inset-0"><Svg w={13} h={13}><path d="M3 6.500l2.500 2.500L10.500 4" stroke="#333" strokeWidth="1.300" /></Svg></span>}
          </span>
          <span className="pb-0.5">自动文字高度</span>
        </label>
      </div>
      <div className="mt-1.5 flex justify-center gap-2 pl-2.5">
        <button className="h-[21px] w-[73px] border-2 border-[#0078d7] bg-[#e1e1e1] pb-px text-xs leading-4">OK</button>
        <button className="h-[21px] w-[73px] border border-[#adadad] bg-[#e1e1e1] pb-0.5 leading-4">取消</button>
      </div>
    </div>
  );
}

function DimRow({ id, label, value }: { id: string; label: string; value: string }) {
  return (
    <div className="flex items-center gap-2 text-[13px] leading-5 text-white">
      <label htmlFor={id} className="pb-0.5">{label}</label>
      <input id={id} defaultValue={value} className="h-[21px] w-10 border border-[#6a6a6a] bg-black px-px pb-0.5 text-xs" />
    </div>
  );
}

function Workspace() {
  return (
    <main className="flex min-w-0 flex-1 flex-col">
      <div className="flex min-h-0 flex-1">
        <div className="relative min-w-0 flex-1 overflow-hidden bg-black">
          <div className="absolute top-[122px] left-[493px] h-[351px] w-[627px] border border-white" />
          <LabelDialog />
          <div className="pointer-events-none absolute top-[385px] left-[515px]">
            <Svg w={210} h={105}>
              <path d="M9 44L56 16" stroke="#f00" strokeWidth="3" strokeLinecap="round" />
              <path d="M69 8L46 11l8 6-1 10z" fill="#f00" />
              <path d="M191 94L181 58" stroke="#f00" strokeWidth="3" strokeLinecap="round" />
              <path d="M177 41l-3 23 7-4 9 0z" fill="#f00" />
            </Svg>
          </div>
          <div className="absolute top-[501px] left-[1153px] flex flex-col">
            <DimRow id="dw" label="宽度" value="18.31" />
            <DimRow id="dh" label="高度" value="10.21" />
          </div>
          <div className="absolute top-[2px] right-[7px] flex items-center gap-[5px]">
            <button aria-label="最小化图纸"><Svg w={11} h={12}><rect x=".5" y="7.500" width="10" height="3" fill="#fff" stroke="#667" /></Svg></button>
            <button aria-label="还原图纸"><Svg w={12} h={12}><path d="M5 4V2h6v5H8M1.500 5.500h6v4h-6z" stroke="#dfe6ee" strokeWidth="2" /></Svg></button>
            <button aria-label="关闭图纸"><Svg w={11} h={12}><path d="M1 2l9 8M10 2L1 10" stroke="#e8eef4" strokeWidth="2.500" /></Svg></button>
          </div>
          <button aria-label="翻译" className="absolute top-[17px] right-2.5 flex size-12 items-center justify-center rounded-full border-3 border-white bg-[#4d80d2]">
            <Svg w={24} h={22}>
              <rect x="1" y="2" width="12" height="12" fill="#fff" />
              <path d="M4 12l3-7 3 7M5 9.500h4" stroke="#4d80d2" strokeWidth="1.500" />
              <rect x="10" y="8.500" width="13" height="13" fill="#fff" stroke="#4d80d2" />
              <path d="M13.500 19l3-7 3 7M14.500 16.500h4" stroke="#4d80d2" strokeWidth="1.500" />
              <path d="M13 1c4 0 5 1 5 4" stroke="#fff" strokeWidth="1.800" />
              <path d="M14.500 4h7L18 8z" fill="#fff" />
            </Svg>
          </button>
        </div>
        <div className="flex w-[17px] shrink-0 flex-col items-center border-l border-white bg-[#f0f0f0] py-1">
          <Chev dir="up" />
          <div className="flex-[47]" />
          <div className="h-[17px] w-[15px] bg-[#cdcdcd]" />
          <div className="flex-[50]" />
          <Chev dir="down" />
        </div>
      </div>
      <div className="flex h-5 shrink-0 items-start bg-gradient-to-r from-[#c5d8ef] to-[#eef6fe] pl-[5px]">
        <div className="relative flex h-[19px] w-[55px] justify-center">
          <span className="absolute inset-0"><Svg w={55} h={19}><path d="M1 0l7 18h39l7-18" fill="#c9daf1" stroke="#93a9c6" /></Svg></span>
          <button className="relative pb-1 text-[11px] leading-[14px] text-[#222]">Model</button>
        </div>
        <div className="ml-auto flex items-start">
          <div className="pt-0.5"><HeartButton /></div>
          <div className="mt-px ml-1 h-[19px] border-l-2 border-dotted border-[#999]" />
          <div className="ml-0.5 flex h-[18px] w-[567px] items-center border border-white bg-[#f0f0f0] px-[3px]">
            <Chev dir="left" />
            <div className="flex-[239]" />
            <div className="h-[15px] w-[17px] bg-[#cdcdcd]" />
            <div className="flex-[279]" />
            <Chev dir="right" />
          </div>
          <div className="w-[17px]" />
        </div>
      </div>
    </main>
  );
}

function CommandPanel() {
  const sl = <span className="w-[5px] text-center">/</span>;
  const opt = "text-[#0000ff]";
  return (
    <section aria-label="命令行" className="shrink-0 bg-[#f0f0f0] pt-1.5">
      <PanelHead title="命令行" pad="pr-[7px]" />
      <div className="relative mt-px flex h-[60px] border-t border-b-2 border-[#7b7b7b] bg-white">
        <div className="flex-1 pl-[3px] text-[13px] leading-4 text-black">
          <p>新建</p>
          <p>便签</p>
        </div>
        <div className="absolute top-1 right-[88px] w-[200px] font-['Open_Sans','Noto_Sans_CJK_SC',sans-serif] whitespace-nowrap text-[#b2b2b2]">
          <p className="text-[21px] leading-7">激活 Windows</p>
          <p className="text-[15px] leading-5">转到“设置”以激活 Windows。</p>
        </div>
        <div className="mr-0.5 flex w-4 flex-col items-center justify-between bg-[#f0f0f0] py-1">
          <Chev dir="up" c="#c0c0c0" />
          <Chev dir="down" c="#c0c0c0" />
        </div>
      </div>
      <div className="flex h-[22px] bg-[#b0d0fb]">
        <div className="flex items-center gap-2 pr-[7px] pb-0.5 pl-2 text-[13px] leading-5 text-black">
          <span>便签</span><span>宽度</span><span className="w-[5px]">[</span>
          <button className={opt}>高度</button>{sl}
          <button className={opt}>偏移</button>{sl}
          <button className={opt}>双重偏移</button>{sl}
          <button className={opt}>取消</button><span className="w-[5px]">]</span>
        </div>
        <input aria-label="命令输入" className="min-w-0 flex-1 border border-[#7b7b7b] bg-white px-1 text-[13px] outline-none" />
      </div>
    </section>
  );
}

function StatusBar() {
  return (
    <footer className="flex h-[19px] shrink-0 items-center border-t border-[#8ba3c0] bg-gradient-to-b from-[#e6f0fb] to-[#c2d6ee] pl-[7px] text-[11px] leading-4 text-[#2a4a7a]">
      <span className="pb-0.5">New2.dxf</span>
      <div className="ml-auto flex items-center self-stretch border-l border-white pl-[98px]">
        <div className="flex items-center gap-1">
          <button aria-label="对象捕捉"><Svg><path d="M4 10V6a4 4 0 0 1 8 0v4" stroke="#c33" strokeWidth="3" /><path d="M8 2a4 4 0 0 1 4 4v5" stroke="#8899aa" strokeWidth="3" /><path d="M3 10l3 4 6-7" stroke="#158a20" strokeWidth="2" /><rect x="12" y="12" width="3" height="3" fill="#d22" /></Svg></button>
          <button aria-label="栅格"><Svg>{[1, 5, 9, 13].map((x) => [2, 6, 10, 14].map((y) => <rect key={`${x}${y}`} x={x} y={y} width="1.500" height="1.500" fill="#222" />))}</Svg></button>
          <button aria-label="正交"><Svg><path d="M8 2v12M2 14h13" stroke="#1a4a90" strokeWidth="1.500" /></Svg></button>
          <button aria-label="极轴"><Svg><path d="M15 1L4 13M2 8h12" stroke="#333" strokeWidth="1.300" /><circle cx="7" cy="8" r="4" stroke="#2a66c0" /><path d="M2 10l3 4 6-6" stroke="#158a20" strokeWidth="2" /></Svg></button>
        </div>
        <span className="ml-2 w-[247px] pb-0.5">(8.658234; -3.422343; 0)</span>
        <span className="h-full w-[202px] border-l border-white" />
      </div>
    </footer>
  );
}

function Overlays() {
  const c = "#3f6ee8";
  return (
    <>
      <div className="absolute right-0 bottom-32 flex h-[58px] w-2.5 flex-col items-end justify-center gap-px rounded-l bg-[#4c5162] pr-px">
        {Array.from({ length: 16 }, (_, i) => (
          <span key={i} className={i < 6 ? "h-0.5 w-1 bg-[#2d3140]" : i < 9 ? "h-0.5 w-1 bg-[#e8d76a]" : i < 13 ? "h-0.5 w-1 bg-[#a9dc8c]" : "h-0.5 w-1 bg-[#67d8cf]"} />
        ))}
      </div>
      <div className="absolute right-0 bottom-0 flex h-[29px] w-[171px] items-center justify-between border border-[#c6c6c6] bg-white pr-2 pl-1">
        <span className="flex size-[21px] items-center justify-center rounded-full border-2 border-[#3f6ee8] text-[8px] leading-3 font-bold text-[#3f6ee8]">iFLY</span>
        <span className="pb-0.5 text-lg leading-6 font-bold text-[#3f6ee8]">中</span>
        <Svg><circle cx="4" cy="4" r="2.500" stroke={c} strokeWidth="2" /><circle cx="11" cy="10" r="2.500" fill={c} /><path d="M13 10c0 3-1 4-3 5" stroke={c} strokeWidth="1.500" /></Svg>
        <Svg><rect x="5" y="0" width="6" height="10" rx="3" fill={c} /><path d="M2 7c0 7 12 7 12 0M8 12v4" stroke={c} strokeWidth="2" /></Svg>
        <Svg><circle cx="8" cy="4.500" r="4" fill={c} /><path d="M1 15c0-7 14-7 14 0z" fill={c} /></Svg>
        <Svg><path d="M0 1h7v6H0zM0 9h7v6H0zM9 9h7v6H9zM12.500 0L16 4l-3.500 4L9 4z" fill={c} /></Svg>
      </div>
      <div className="pointer-events-none absolute right-2.5 bottom-2 flex items-end opacity-75">
        <Svg w={46} h={42}>
          <path d="M44 2C24-1 8 8 3 23c-1 6 3 8 8 8C8 22 13 8 44 2z" fill="#3f98dc" />
          <path d="M10 18c6-9 14-10 20-9-9 2-14 6-15 12s7 5 8 0c2 6-4 8-9 7-4-1-5-6-4-10z" fill="#3379c5" />
          <path d="M19 20c10-6 21-4 21 5 0 8-14 16-32 15 14-3 25-9 25-15 0-5-7-7-14-5z" fill="#4db26a" />
          <path d="M8 40c12-1 21-5 24-10-2 6-10 10-24 10z" fill="#d0dc55" />
        </Svg>
        <div className="-ml-1 whitespace-nowrap">
          <p className="pb-0.5 text-[21px] leading-[22px] font-bold text-[#3a86cf]">极光下载站</p>
          <p className="font-['Liberation_Sans'] text-base leading-[18px] font-bold text-[#42b565]">www.xz7.com</p>
        </div>
      </div>
    </>
  );
}

export default function App() {
  return (
    <div className="relative flex h-screen flex-col overflow-hidden bg-[#2e2e2e] font-['Noto_Sans_CJK_SC','Noto_Sans',sans-serif]">
      <TitleBar />
      <TabRow />
      <div className="flex min-h-0 flex-1 flex-col border-x-2 border-l-black border-r-[#2b2b2b] pb-[3px]">
        <Ribbon />
        <div className="flex h-[27px] shrink-0 items-end justify-between bg-gradient-to-r from-[#c6d9f0] to-[#edf5fe] pr-[7px] pl-1">
          <div className="flex h-[22px] items-center gap-2 rounded-t border border-r-3 border-b-0 border-[#9db2cd] bg-gradient-to-b from-[#d5e3f5] to-[#c3d6ee] pr-1 pl-[7px]">
            <button className="pb-px text-[11px] leading-5 text-[#1a1a1a]">New2.dxf</button>
            <button aria-label="关闭 New2.dxf" className="flex size-[18px] items-center justify-center rounded-[3px] border border-[#a3b6cf] bg-[#e2ecf8]">
              <Svg w={10} h={10}><path d="M1 1h2l2 2 2-2h2v2L7 5l2 2v2H7L5 7 3 9H1V7l2-2-2-2z" fill="#fff" stroke="#8a8250" /></Svg>
            </button>
          </div>
          <div className="pb-0.5"><HeartButton /></div>
        </div>
        <div className="flex min-h-0 flex-1">
          <SidePanel />
          <Workspace />
        </div>
        <CommandPanel />
        <StatusBar />
      </div>
      <Overlays />
    </div>
  );
}
